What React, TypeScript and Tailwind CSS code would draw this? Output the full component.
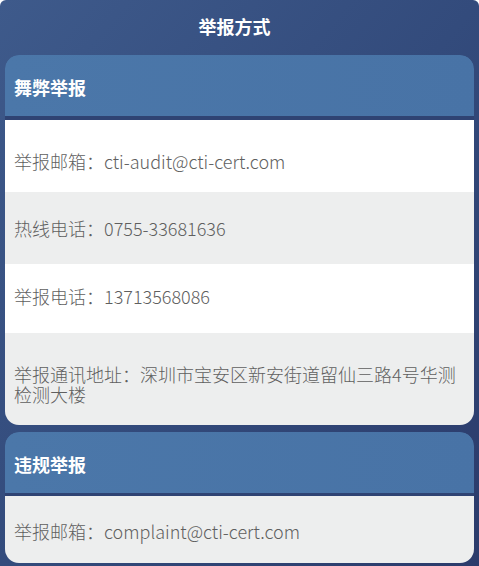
const font = { fontFamily: '"Noto Sans CJK SC", "Noto Sans", sans-serif' };

const Row = ({ text, gray, className = "" }: { text: string; gray?: boolean; className?: string }) => (
  <div
    className={`px-[9px] text-[18px] leading-[20px] font-light text-[#5f5f5f] ${gray ? "bg-[#edeeee]" : "bg-white"} ${className}`}
  >
    {text}
  </div>
);

const CardHeader = ({ title }: { title: string }) => (
  <div className="h-[61px] flex items-center px-[9px] pt-[4px] rounded-t-[14px] bg-gradient-to-r from-[#4b77a9] to-[#4873a6] text-white font-bold text-[18px]">
    {title}
  </div>
);

export default function App() {
  return (
    <div style={font} className="w-[479px] h-[566px] overflow-hidden">
      <div className="h-full rounded-t-[6px] bg-gradient-to-br from-[#3e5a8b] via-[#334b7c] to-[#2b3b6b] px-[5px]">
        <div className="h-[55px] flex items-center justify-center pr-[10px] text-white font-bold text-[18px] pb-[2px]">
          举报方式
        </div>

        {/* 舞弊举报 */}
        <div className="rounded-[14px] overflow-hidden">
          <CardHeader title="舞弊举报" />
          <div className="h-[4px] bg-[#2f4373]" />
          <Row text="举报邮箱：cti-audit@cti-cert.com" className="pt-[31px] pb-[21px]" />
          <Row text="热线电话：0755-33681636" gray className="pt-[26px] pb-[26px]" />
          <Row text="举报电话：13713568086" className="pt-[22px] pb-[27px]" />
          <Row
            text="举报通讯地址：深圳市宝安区新安街道留仙三路4号华测检测大楼"
            gray
            className="pt-[31px] pb-[21px]"
          />
        </div>

        {/* 违规举报 */}
        <div className="mt-[7px] rounded-[14px] overflow-hidden">
          <CardHeader title="违规举报" />
          <div className="h-[3px] bg-[#2f4373]" />
          <Row text="举报邮箱：complaint@cti-cert.com" gray className="pt-[25px] pb-[22px]" />
        </div>
      </div>
    </div>
  );
}
